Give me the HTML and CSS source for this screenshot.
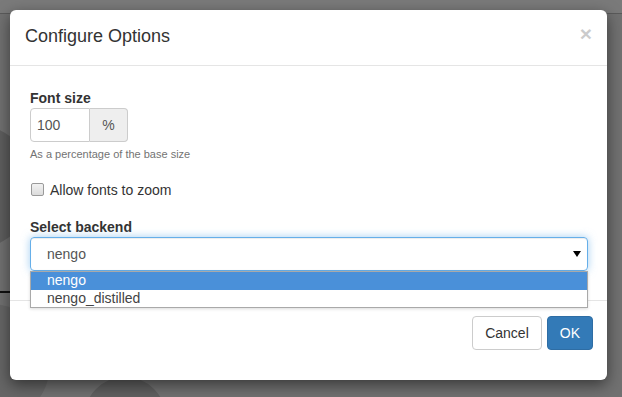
FILE: index.html
```html
<!DOCTYPE html>
<html lang="en">
<head>
<meta charset="utf-8">
<title>Configure Options</title>
<link rel="stylesheet" href="styles.css">
</head>
<body>
<div class="page">
  <div class="blob blob-a"></div>
  <div class="blob blob-b"></div>
  <div class="blob blob-c"></div>
  <div class="rule"></div>
</div>
<div class="modal">
  <div class="modal-header">
    <h4 class="modal-title">Configure Options</h4>
    <span class="close">&times;</span>
  </div>
  <div class="modal-body">
    <label class="field-label">Font size</label>
    <div class="input-group">
      <div class="input">100</div>
      <div class="addon">%</div>
    </div>
    <p class="help">As a percentage of the base size</p>
    <div class="check-row">
      <span class="checkbox"></span>
      <span class="check-label">Allow fonts to zoom</span>
    </div>
    <label class="field-label select-label">Select backend</label>
    <div class="select-wrap">
      <div class="select">
        <span>nengo</span>
        <svg class="caret" width="8" height="6" viewBox="0 0 8 6"><path d="M0 0H8L4 6Z" fill="#000"/></svg>
      </div>
      <ul class="options">
        <li class="option active">nengo</li>
        <li class="option">nengo_distilled</li>
      </ul>
    </div>
  </div>
  <div class="modal-footer">
    <button class="btn btn-default">Cancel</button>
    <button class="btn btn-primary">OK</button>
  </div>
</div>
</body>
</html>
```
FILE: styles.css
```css
html, body {
  margin: 0;
  padding: 0;
}
body {
  width: 622px;
  height: 397px;
  overflow: hidden;
  position: relative;
  background: #7a7a7a;
  font-family: "Liberation Sans", Arial, sans-serif;
  font-size: 14px;
  color: #333;
}
.page {
  position: absolute;
  left: 0;
  right: 0;
  top: 13px;
  bottom: 0;
  background: #717171;
  border-top: 1px solid #5a5a5a;
  overflow: hidden;
}
.blob {
  position: absolute;
  border-radius: 50%;
  background: #5e5e5e;
}
.blob-a {
  left: -90px;
  top: 110px;
  width: 125px;
  height: 125px;
}
.blob-b {
  left: -70px;
  top: 290px;
  width: 120px;
  height: 120px;
  background: #666;
}
.blob-c {
  left: 84px;
  top: 363px;
  width: 82px;
  height: 82px;
  background: #606060;
}
.rule {
  position: absolute;
  left: 0;
  top: 277px;
  width: 40px;
  height: 2px;
  background: #111;
}
.modal {
  position: relative;
  margin: 10px 0 0 10px;
  width: 597px;
  background: #fff;
  border-radius: 6px;
  box-shadow: 0 5px 15px rgba(0, 0, 0, 0.5);
}
.modal-header {
  display: flex;
  justify-content: space-between;
  align-items: flex-start;
  height: 25px;
  padding: 14px 15px 16px;
  border-bottom: 1px solid #e5e5e5;
}
.modal-title {
  margin: 0;
  font-size: 18px;
  font-weight: normal;
  line-height: 25px;
  color: #333;
}
.close {
  font-size: 21px;
  font-weight: bold;
  line-height: 21px;
  color: #000;
  opacity: 0.2;
  margin-top: -1px;
}
.modal-body {
  padding: 22px 19px 29px 20px;
}
.field-label {
  display: block;
  font-weight: bold;
  line-height: 20px;
}
.input-group {
  display: flex;
  width: 98px;
  height: 34px;
}
.input {
  box-sizing: border-box;
  width: 60px;
  padding: 6px;
  line-height: 20px;
  border: 1px solid #ccc;
  border-radius: 4px 0 0 4px;
  color: #555;
}
.addon {
  box-sizing: border-box;
  width: 38px;
  line-height: 32px;
  text-align: center;
  background: #eee;
  border: 1px solid #ccc;
  border-left: 0;
  border-radius: 0 4px 4px 0;
  color: #555;
}
.help {
  margin: 5px 0 0;
  font-size: 11px;
  line-height: 15.7px;
  color: #737373;
}
.check-row {
  display: flex;
  align-items: center;
  margin-top: 17px;
  height: 20px;
}
.checkbox {
  box-sizing: border-box;
  width: 13px;
  height: 13px;
  margin-left: 1px;
  border: 1px solid #9a9a9a;
  border-radius: 2px;
  background: linear-gradient(#f2f2f2, #dcdcdc);
}
.check-label {
  margin-left: 6px;
}
.select-label {
  margin-top: 17.3px;
}
.select-wrap {
  position: relative;
}
.select {
  box-sizing: border-box;
  height: 34px;
  display: flex;
  align-items: center;
  justify-content: space-between;
  padding: 0 6px 0 16px;
  border: 1px solid #66afe9;
  border-radius: 4px;
  box-shadow: inset 0 1px 1px rgba(0, 0, 0, 0.075), 0 0 8px rgba(102, 175, 233, 0.6);
  color: #555;
}
.caret {
  display: block;
}
.options {
  position: absolute;
  left: 0;
  right: 0;
  top: 100%;
  margin: 0;
  padding: 0;
  list-style: none;
  background: #fff;
  border: 1px solid #a9a9a9;
  box-shadow: 0 1px 3px rgba(0, 0, 0, 0.15);
  z-index: 2;
}
.option {
  height: 17.5px;
  line-height: 17.5px;
  padding-left: 16px;
  color: #444;
}
.option.active {
  background: #4a90d9;
  color: #fff;
}
.modal-footer {
  display: flex;
  justify-content: flex-end;
  gap: 5px;
  padding: 15px 14px 30px;
  border-top: 1px solid #e5e5e5;
}
.btn {
  font-family: "Liberation Sans", Arial, sans-serif;
  font-size: 14px;
  line-height: 20px;
  padding: 6px 12px;
  border: 1px solid transparent;
  border-radius: 4px;
  margin: 0;
}
.btn-default {
  background: #fff;
  border-color: #ccc;
  color: #333;
}
.btn-primary {
  background: #337ab7;
  border-color: #2e6da4;
  color: #fff;
}
```
